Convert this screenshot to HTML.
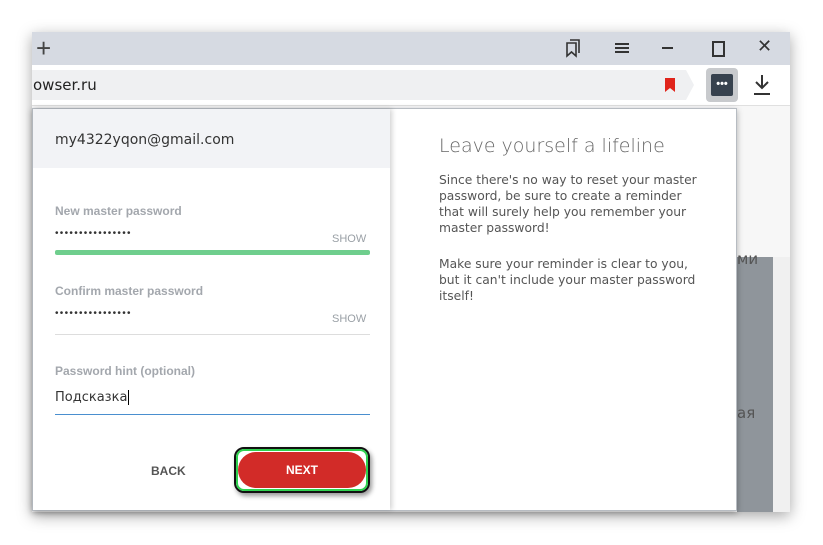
<!DOCTYPE html>
<html><head><style>
body{margin:0;width:823px;height:545px;background:#fff;position:relative;overflow:hidden;font-family:"Liberation Sans","DejaVu Sans",sans-serif}
.a{position:absolute}
.win{left:32px;top:32px;width:758px;height:480px;background:#f7f7f8;box-shadow:0 4px 14px rgba(0,0,0,.35)}
.lbl{font-size:12px;color:#a3a7ad;font-weight:bold}
.dots{font-family:"Liberation Sans",sans-serif;font-size:10px;color:#333;letter-spacing:1.3px}
.show{font-size:11px;color:#9aa0a6}
.rt{font-family:"DejaVu Sans",sans-serif;color:#555;font-size:12.3px;line-height:16px}
</style></head><body>
<div class="a win"></div>
<div class="a" style="left:32px;top:32px;width:758px;height:33px;background:#d6dae2"></div>
<div class="a" style="left:36px;top:33px;font-size:26px;color:#444;line-height:30px">+</div>
<svg class="a" style="left:563px;top:38px" width="20" height="20" viewBox="0 0 20 20" fill="none" stroke="#333" stroke-width="1.6"><path d="M4 5h9v13l-4.5-4-4.5 4z"/><path d="M7 2h9v13"/></svg>
<div class="a" style="left:615px;top:43px;width:14px;height:2px;background:#333;box-shadow:0 4px 0 #333,0 8px 0 #333"></div>
<div class="a" style="left:662px;top:47px;width:11px;height:2px;background:#333"></div>
<div class="a" style="left:712px;top:41px;width:9px;height:12px;border:2px solid #333"></div>
<div class="a" style="left:757px;top:36px;font-size:18px;color:#333">✕</div>
<div class="a" style="left:32px;top:65px;width:758px;height:40px;background:#fff;border-bottom:1px solid #e0e0e0"></div>
<div class="a" style="left:32px;top:70px;width:654px;height:30px;background:#eff0f2"></div>
<div class="a" style="left:686px;top:70px;width:0;height:0;border-top:15px solid transparent;border-bottom:15px solid transparent;border-left:8px solid #eff0f2"></div>
<div class="a" style="left:33px;top:76px;font-size:15px;color:#222;font-family:'DejaVu Sans',sans-serif">owser.ru</div>
<svg class="a" style="left:665px;top:78px" width="10" height="14"><path d="M0 0h10v14l-5-4-5 4z" fill="#e0251c"/></svg>
<div class="a" style="left:706px;top:68px;width:32px;height:34px;background:#c8cacd;border-radius:4px"></div>
<div class="a" style="left:711px;top:74px;width:22px;height:22px;background:#37424e;border-radius:2px;color:#fff;font-size:11px;line-height:20px;text-align:center;font-weight:bold">•••</div>
<svg class="a" style="left:752px;top:74px" width="20" height="22" fill="none" stroke="#333" stroke-width="2"><path d="M10 1v13M4 8l6 6 6-6M2 20h16"/></svg>
<div class="a" style="left:737px;top:106px;width:53px;height:151px;background:#f7f7f7"></div>
<div class="a" style="left:737px;top:257px;width:36px;height:255px;background:#8f959b"></div>
<div class="a" style="left:773px;top:257px;width:17px;height:255px;background:#f0f0f0"></div>
<div class="a" style="left:737px;top:250px;font-size:15px;color:#555;font-family:'DejaVu Sans',sans-serif">ми</div>
<div class="a" style="left:737px;top:404px;font-size:15px;color:#555;font-family:'DejaVu Sans',sans-serif">ая</div>
<div class="a" style="left:32px;top:108px;width:705px;height:403px;background:#fff;border:1px solid #b7bcc2;box-sizing:border-box;box-shadow:0 2px 6px rgba(0,0,0,.3)"></div>
<div class="a" style="left:33px;top:109px;width:357px;height:401px;background:#fff;box-shadow:2px 0 5px rgba(0,0,0,.18)"></div>
<div class="a" style="left:33px;top:109px;width:357px;height:59px;background:#f2f3f6"></div>
<div class="a" style="left:55px;top:132px;font-size:14px;color:#333;font-family:'DejaVu Sans',sans-serif">my4322yqon@gmail.com</div>
<div class="a lbl" style="left:55px;top:204px">New master password</div>
<div class="a dots" style="left:55px;top:228px">••••••••••••••••</div>
<div class="a show" style="left:332px;top:233px">SHOW</div>
<div class="a" style="left:55px;top:250px;width:315px;height:5px;background:#6fce8d;border-radius:2px"></div>
<div class="a lbl" style="left:55px;top:284px">Confirm master password</div>
<div class="a dots" style="left:55px;top:308px">••••••••••••••••</div>
<div class="a show" style="left:332px;top:313px">SHOW</div>
<div class="a" style="left:55px;top:334px;width:315px;height:1px;background:#ddd"></div>
<div class="a lbl" style="left:55px;top:364px">Password hint (optional)</div>
<div class="a" style="left:55px;top:390px;font-size:13px;color:#333;font-family:'DejaVu Sans',sans-serif">Подсказка<span style="border-left:1px solid #000;margin-left:1px"></span></div>
<div class="a" style="left:55px;top:414px;width:315px;height:1px;background:#4a8fcf"></div>
<div class="a" style="left:151px;top:464px;font-size:12px;font-weight:bold;color:#555">BACK</div>
<div class="a" style="left:234px;top:447px;width:136px;height:46px;border:2px solid #111;border-radius:10px;box-sizing:border-box;background:#fff;box-shadow:2px 3px 5px rgba(0,0,0,.4)"></div>
<div class="a" style="left:236px;top:449px;width:132px;height:42px;border:2px solid #2fd14f;border-radius:8px;box-sizing:border-box"></div>
<div class="a" style="left:238px;top:452px;width:128px;height:36px;border-radius:18px;background:#d22b28;color:#fff;font-weight:bold;font-size:12px;line-height:36px;text-align:center">NEXT</div>
<div class="a" style="left:439px;top:135px;font-size:19px;color:#666;font-family:'DejaVu Sans',sans-serif;font-weight:300">Leave yourself a lifeline</div>
<div class="a rt" style="left:439px;top:172px;width:265px">Since there's no way to reset your master password, be sure to create a reminder that will surely help you remember your master password!</div>
<div class="a rt" style="left:439px;top:256px;width:265px">Make sure your reminder is clear to you, but it can't include your master password itself!</div>
</body></html>
